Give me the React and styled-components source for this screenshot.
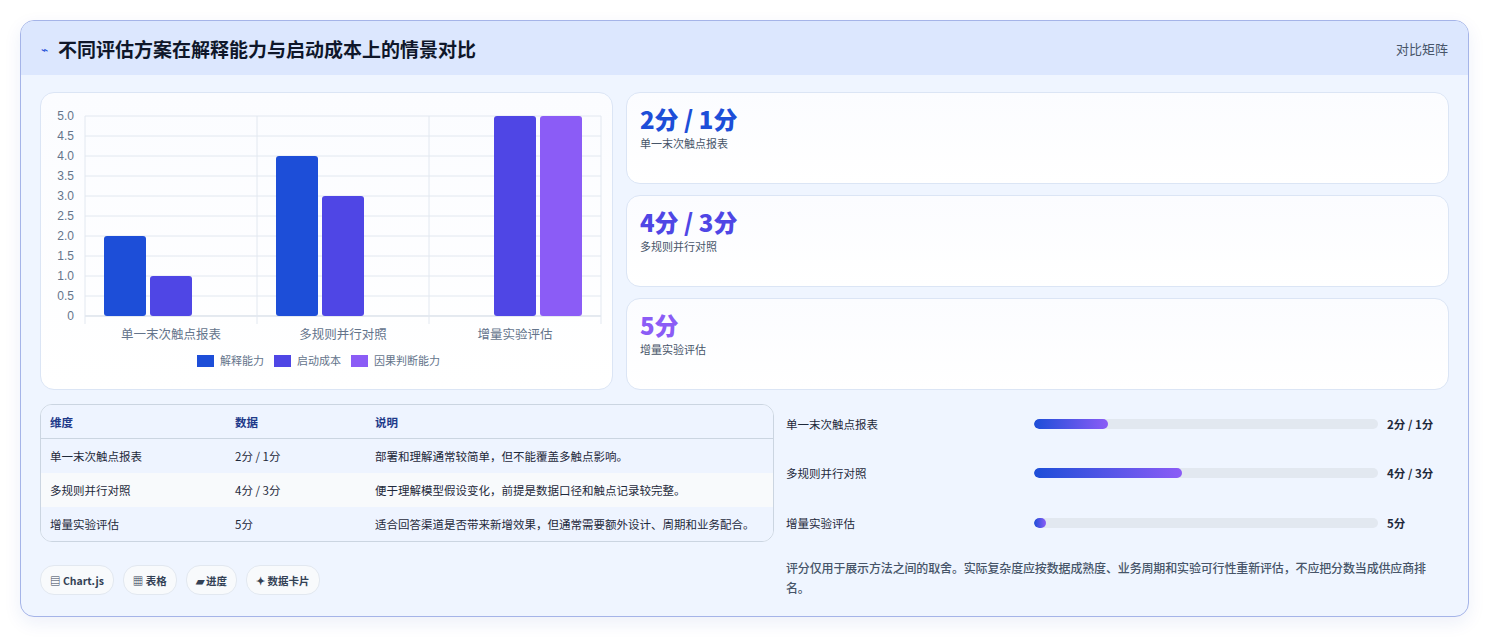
import React from "react";
import styled, { createGlobalStyle } from "styled-components";

const Global = createGlobalStyle`
  html, body { margin: 0; background: #fff; }
  body { font-family: "Noto Sans CJK SC", "Noto Sans", sans-serif; color: #1e293b; }
`;

const Page = styled.div`
  padding: 20px 20px 21px 20px;
  width: 1449px;
`;
const Frame = styled.section`
  border: 1px solid #a5b4e8;
  border-radius: 14px;
  background: #eff5ff;
  overflow: hidden;
  box-shadow: 0 6px 18px rgba(30, 64, 175, 0.08);
`;
const Header = styled.header`
  height: 54px;
  background: #dce7fe;
  display: flex;
  align-items: center;
  justify-content: space-between;
  padding: 0 20px 0 20px;
`;
const Title = styled.h2`
  margin: 0;
  font-size: 19px;
  font-weight: 700;
  color: #0f172a;
  display: flex;
  align-items: center;
  gap: 10px;
`;
const TitleIcon = styled.span`
  color: #1d4ed8;
  font-size: 12px;
  font-weight: 400;
`;
const Tag = styled.span`
  font-size: 13px;
  color: #475569;
`;
const Body = styled.div`
  padding: 17px 19px 18px 19px;
  display: flex;
  flex-direction: column;
  gap: 14px;
`;
const TopGrid = styled.div`
  display: grid;
  grid-template-columns: 573px 1fr;
  gap: 13px;
`;
const Card = styled.div`
  background: linear-gradient(#fbfcff, #ffffff);
  border: 1px solid #dbe5f5;
  border-radius: 14px;
`;
const ChartCard = styled(Card)`
  height: 296px;
  padding: 0;
  overflow: hidden;
`;
const Stats = styled.div`
  display: flex;
  flex-direction: column;
  gap: 11px;
`;
const Stat = styled(Card)`
  height: 92px;
  padding: 10px 13px;
  box-sizing: border-box;
`;
const StatValue = styled.div`
  font-size: 24px;
  font-weight: 800;
  line-height: 32px;
  color: ${p => p.$color};
`;
const StatLabel = styled.div`
  font-size: 11px;
  color: #475569;
`;
const BottomGrid = styled.div`
  display: grid;
  grid-template-columns: 734px 1fr;
  gap: 12px;
`;
const LeftCol = styled.div`
  display: flex;
  flex-direction: column;
  gap: 23px;
`;
const TableWrap = styled.div`
  border: 1px solid #cbd5e1;
  border-radius: 12px;
  overflow: hidden;
  background: #f8fafc;
`;
const Table = styled.table`
  width: 100%;
  border-collapse: collapse;
  font-size: 11.5px;
`;
const Th = styled.th`
  text-align: left;
  font-weight: 600;
  color: #1e3a8a;
  background: #eef4ff;
  height: 33px;
  padding: 0 0 0 9px;
  border-bottom: 1px solid #cbd5e1;
  width: ${p => p.$w || "auto"};
`;
const Tr = styled.tr`
  background: ${p => (p.$alt ? "#f8fafc" : "#eef4ff")};
  & + & td { border-top: 1px solid #dbe3ee; }
`;
const Td = styled.td`
  height: 34px;
  padding: 0 0 0 9px;
  color: #1e293b;
`;
const Pills = styled.div`
  display: flex;
  gap: 9px;
`;
const Pill = styled.span`
  height: 28px;
  padding: 0 9px;
  border: 1px solid #e2e8f0;
  border-radius: 14px;
  background: #f8fafc;
  display: inline-flex;
  align-items: center;
  gap: 3px;
  font-size: 10.5px;
  font-weight: 600;
  color: #334155;
`;
const RightCol = styled.div`
  display: flex;
  flex-direction: column;
  padding-top: 10px;
`;
const BarRow = styled.div`
  display: grid;
  grid-template-columns: 239px 344px 1fr;
  align-items: center;
  column-gap: 9px;
  height: 49.5px;
  font-size: 11.5px;
  color: #1e293b;
  &:first-child { margin-top: -15px; }
`;
const Track = styled.div`
  height: 10px;
  border-radius: 5px;
  background: #e2e8f0;
  overflow: hidden;
`;
const Fill = styled.div`
  height: 100%;
  border-radius: 5px;
  background: linear-gradient(90deg, #1d4ed8, #8b5cf6);
`;
const Value = styled.span`
  font-weight: 700;
  font-size: 11.5px;
`;
const Note = styled.p`
  margin: 10px 0 0;
  font-size: 12px;
  line-height: 20px;
  color: #475569;
  font-weight: 500;
  letter-spacing: -0.15px;
`;

const cats = ["单一末次触点报表", "多规则并行对照", "增量实验评估"];
const series = [
  { name: "解释能力", color: "#1d4ed8", data: [2, 4, 0] },
  { name: "启动成本", color: "#4f46e5", data: [1, 3, 5] },
  { name: "因果判断能力", color: "#8b5cf6", data: [0, 0, 5] },
];

function Chart() {
  const x0 = 44, x1 = 560, yTop = 23, yBot = 223;
  const cw = (x1 - x0) / 3;
  const ticks = [0, 0.5, 1, 1.5, 2, 2.5, 3, 3.5, 4, 4.5, 5];
  const y = v => yBot - (v / 5) * (yBot - yTop);
  return (
    <svg width="572" height="296" viewBox="0 0 572 296" fontFamily='"Liberation Sans", "Noto Sans CJK SC", sans-serif'>
      {ticks.map(t => (
        <g key={t}>
          <line x1={x0} x2={x1} y1={y(t)} y2={y(t)} stroke={t === 0 ? "#cbd5e1" : "#e2e8f0"} />
          <text x={x0 - 11} y={y(t) + 4} fontSize="12" fill="#64748b" textAnchor="end">{t === 0 ? "0" : t.toFixed(1)}</text>
        </g>
      ))}
      {[0, 1, 2, 3].map(i => (
        <line key={i} x1={x0 + i * cw} x2={x0 + i * cw} y1={yTop} y2={yBot + 8} stroke="#e2e8f0" />
      ))}
      {cats.map((c, ci) => (
        <g key={c}>
          {series.map((s, si) => s.data[ci] > 0 && (
            <rect key={si} x={x0 + ci * cw + 19 + si * 46} y={y(s.data[ci])} width="42" height={yBot - y(s.data[ci])} rx="3" fill={s.color} />
          ))}
          <text x={x0 + ci * cw + cw / 2} y="246" fontSize="12.5" fill="#64748b" textAnchor="middle">{c}</text>
        </g>
      ))}
      {(() => {
        let x = 156;
        return series.map(s => {
          const g = (
            <g key={s.name}>
              <rect x={x} y="262" width="17" height="12" fill={s.color} />
              <text x={x + 23} y="272" fontSize="11" fill="#64748b">{s.name}</text>
            </g>
          );
          x += 23 + s.name.length * 11 + 10;
          return g;
        });
      })()}
    </svg>
  );
}

const rows = [
  ["单一末次触点报表", "2分 / 1分", "部署和理解通常较简单，但不能覆盖多触点影响。", 21.5],
  ["多规则并行对照", "4分 / 3分", "便于理解模型假设变化，前提是数据口径和触点记录较完整。", 43],
  ["增量实验评估", "5分", "适合回答渠道是否带来新增效果，但通常需要额外设计、周期和业务配合。", 3.5],
];

export default function App() {
  return (
    <Page>
      <Global />
      <Frame>
        <Header>
          <Title><TitleIcon>⌁</TitleIcon>不同评估方案在解释能力与启动成本上的情景对比</Title>
          <Tag>对比矩阵</Tag>
        </Header>
        <Body>
          <TopGrid>
            <ChartCard><Chart /></ChartCard>
            <Stats>
              <Stat><StatValue $color="#1d4ed8">2分 / 1分</StatValue><StatLabel>单一末次触点报表</StatLabel></Stat>
              <Stat><StatValue $color="#4f46e5">4分 / 3分</StatValue><StatLabel>多规则并行对照</StatLabel></Stat>
              <Stat><StatValue $color="#8b5cf6">5分</StatValue><StatLabel>增量实验评估</StatLabel></Stat>
            </Stats>
          </TopGrid>
          <BottomGrid>
            <LeftCol>
              <TableWrap>
                <Table>
                  <thead>
                    <tr><Th $w="176px">维度</Th><Th $w="131px">数据</Th><Th>说明</Th></tr>
                  </thead>
                  <tbody>
                    {rows.map((r, i) => (
                      <Tr key={r[0]} $alt={i === 1}>
                        <Td>{r[0]}</Td><Td>{r[1]}</Td><Td>{r[2]}</Td>
                      </Tr>
                    ))}
                  </tbody>
                </Table>
              </TableWrap>
              <Pills>
                <Pill>▤ Chart.js</Pill>
                <Pill>▦ 表格</Pill>
                <Pill>▰ 进度</Pill>
                <Pill>✦ 数据卡片</Pill>
              </Pills>
            </LeftCol>
            <RightCol>
              {rows.map(r => (
                <BarRow key={r[0]}>
                  <span>{r[0]}</span>
                  <Track><Fill style={{ width: `${r[3]}%` }} /></Track>
                  <Value>{r[1]}</Value>
                </BarRow>
              ))}
              <Note>评分仅用于展示方法之间的取舍。实际复杂度应按数据成熟度、业务周期和实验可行性重新评估，不应把分数当成供应商排名。</Note>
            </RightCol>
          </BottomGrid>
        </Body>
      </Frame>
    </Page>
  );
}
